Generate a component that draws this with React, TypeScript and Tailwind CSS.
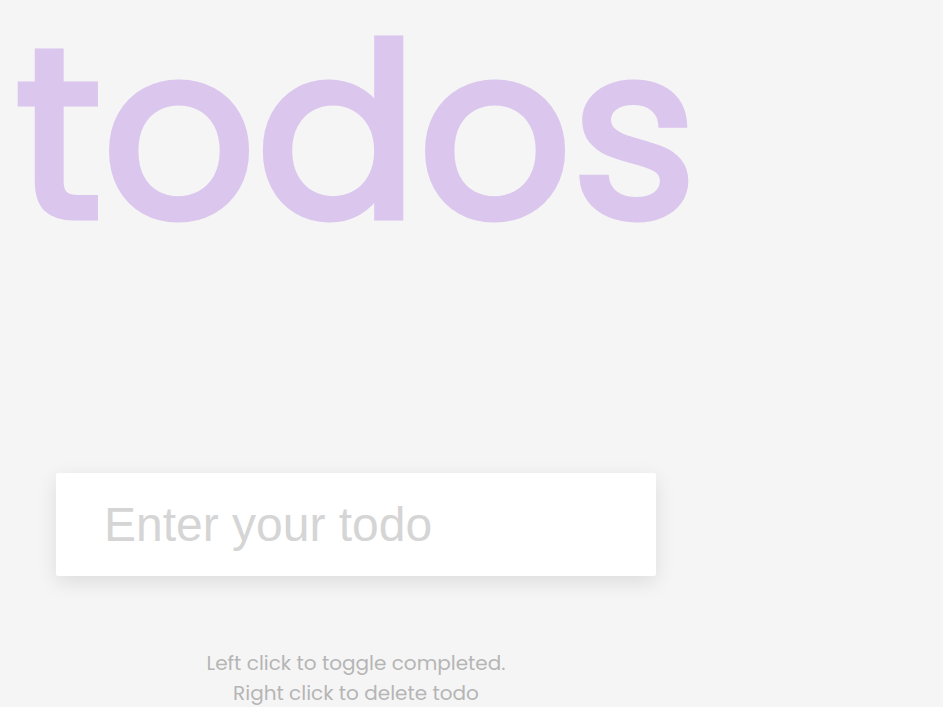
export default function App() {
  return (
    <div className="min-h-screen overflow-hidden bg-[#f5f5f5] font-['Poppins','Inter',sans-serif] text-[#444444]">
      <main className="flex w-full max-w-[712px] flex-col items-center">
        <h1 className="text-center text-[240px] leading-[266px] font-normal text-[#dbc6ed] [-webkit-text-stroke:7px_#dbc6ed]">
          todos
        </h1>
        <form className="mt-[207px] w-full px-14" onSubmit={(event) => event.preventDefault()}>
          <input
            type="text"
            aria-label="Enter your todo"
            placeholder="Enter your todo"
            autoComplete="off"
            className="block h-[103px] w-full rounded-xs bg-white px-12 font-['Liberation_Sans',Arial,sans-serif] text-5xl shadow-[0_6px_20px_rgba(0,0,0,0.1)] outline-none placeholder:text-[#d5d5d5]"
          />
        </form>
        <small className="mt-[72px] text-center text-xl leading-[30px] text-[#b5b5b5]">
          Left click to toggle completed.
          <br />
          Right click to delete todo
        </small>
      </main>
    </div>
  );
}
